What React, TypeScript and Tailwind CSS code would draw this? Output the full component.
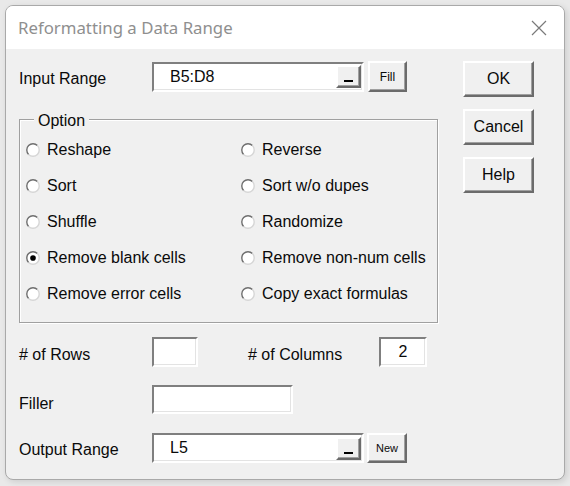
import React from "react";

const sunken =
  "bg-white border-t-2 border-l-2 border-b-2 border-r-2 border-t-[#7f7f7f] border-l-[#7f7f7f] border-b-white border-r-white shadow-[inset_-1px_-1px_0_#e3e3e3]";
const raised =
  "bg-[#f0f0f0] border-t-2 border-l-2 border-b-2 border-r-2 border-t-white border-l-white border-b-[#6b6b6b] border-r-[#6b6b6b] shadow-[inset_-1px_-1px_0_#a0a0a0]";

function Radio({ checked }: { checked?: boolean }) {
  return (
    <svg width="14" height="14" viewBox="0 0 14 14" className="h-[14px] w-[14px] shrink-0">
      <circle cx="7" cy="7" r="6.2" fill="#fff" />
      <path d="M2.6 11.4 A6.2 6.2 0 0 1 11.4 2.6" fill="none" stroke="#6e6e6e" strokeWidth="1.4" />
      <path d="M11.4 2.6 A6.2 6.2 0 0 1 2.6 11.4" fill="none" stroke="#d6d6d6" strokeWidth="1.4" />
      {checked && <circle cx="7" cy="7" r="2.8" fill="#000" />}
    </svg>
  );
}

function Option({ label, checked }: { label: string; checked?: boolean }) {
  return (
    <div className="flex h-[36px] items-center gap-[7px]">
      <Radio checked={checked} />
      <span>{label}</span>
    </div>
  );
}

function RefEdit({ value }: { value: string }) {
  return (
    <div className={`flex h-[30px] w-[212px] items-center ${sunken}`}>
      <span className="flex-1 pl-[16px]">{value}</span>
      <div className={`mr-[1px] flex h-[23px] w-[25px] items-end justify-center pb-[4px] ${raised}`}>
        <div className="h-[2px] w-[9px] bg-black" />
      </div>
    </div>
  );
}

export default function App() {
  const options: [string, boolean][] = [
    ["Reshape", false],
    ["Reverse", false],
    ["Sort", false],
    ["Sort w/o dupes", false],
    ["Shuffle", false],
    ["Randomize", false],
    ["Remove blank cells", true],
    ["Remove non-num cells", false],
    ["Remove error cells", false],
    ["Copy exact formulas", false],
  ];

  return (
    <div className="h-[486px] w-[570px] bg-[#e9e9e9] pl-[5px] pt-[5px]">
      <div className="flex h-[475px] w-[560px] flex-col overflow-hidden rounded-[8px] border border-[#a9a9a9] bg-[#f0f0f0] shadow-[2px_2px_6px_rgba(0,0,0,0.12)]">
        {/* title bar */}
        <div className="flex h-[43px] shrink-0 items-center justify-between bg-white pl-[12px] pr-[17px]">
          <span className="text-[16.8px] text-[#8f8f8f]" style={{ fontFamily: '"Noto Sans", "Open Sans", sans-serif' }}>
            Reformatting a Data Range
          </span>
          <svg width="16" height="16" viewBox="0 0 16 16">
            <path d="M1 1 L15 15 M15 1 L1 15" stroke="#7a7a7a" strokeWidth="1.2" />
          </svg>
        </div>

        {/* body */}
        <div
          className="flex flex-1 pl-[13px] pt-[12px] text-[16px] text-[#0a0a0a]"
          style={{ fontFamily: '"Liberation Sans", Arial, sans-serif' }}
        >
          <div className="flex w-[419px] flex-col">
            <div className="flex h-[31px] items-center">
              <span className="w-[133px] pt-[5px]">Input Range</span>
              <RefEdit value="B5:D8" />
              <button className={`ml-[4px] h-[31px] w-[39px] text-[12px] ${raised}`}>Fill</button>
            </div>

            <div className="relative mt-[27px] h-[204px] border border-[#a0a0a0] pl-[6px] pt-[12px] shadow-[1px_1px_0_#fff,inset_1px_1px_0_#fff]">
              <span className="absolute -top-[11px] left-[14px] bg-[#f0f0f0] px-[4px]">Option</span>
              <div className="grid grid-cols-[215px_1fr]">
                {options.map(([label, checked]) => (
                  <Option key={label} label={label} checked={checked} />
                ))}
              </div>
            </div>

            <div className="mt-[14px] flex h-[30px] items-center">
              <span className="w-[133px] pt-[6px]"># of Rows</span>
              <div className={`h-[30px] w-[46px] ${sunken}`} />
              <span className="ml-[50px] w-[131px] pt-[6px]"># of Columns</span>
              <div className={`flex h-[30px] w-[48px] items-center justify-center ${sunken}`}>2</div>
            </div>

            <div className="mt-[18px] flex h-[29px] items-center">
              <span className="w-[133px] pt-[8px]">Filler</span>
              <div className={`h-[29px] w-[141px] ${sunken}`} />
            </div>

            <div className="mt-[19px] flex h-[30px] items-center">
              <span className="w-[133px] pt-[3px]">Output Range</span>
              <RefEdit value="L5" />
              <button className={`ml-[3px] h-[30px] w-[40px] text-[11px] ${raised}`}>New</button>
            </div>
          </div>

          <div className="ml-[25px] flex flex-col gap-[12px]">
            <button className={`h-[36px] w-[71px] ${raised}`}>OK</button>
            <button className={`h-[36px] w-[71px] ${raised}`}>Cancel</button>
            <button className={`h-[36px] w-[71px] ${raised}`}>Help</button>
          </div>
        </div>
      </div>
    </div>
  );
}
